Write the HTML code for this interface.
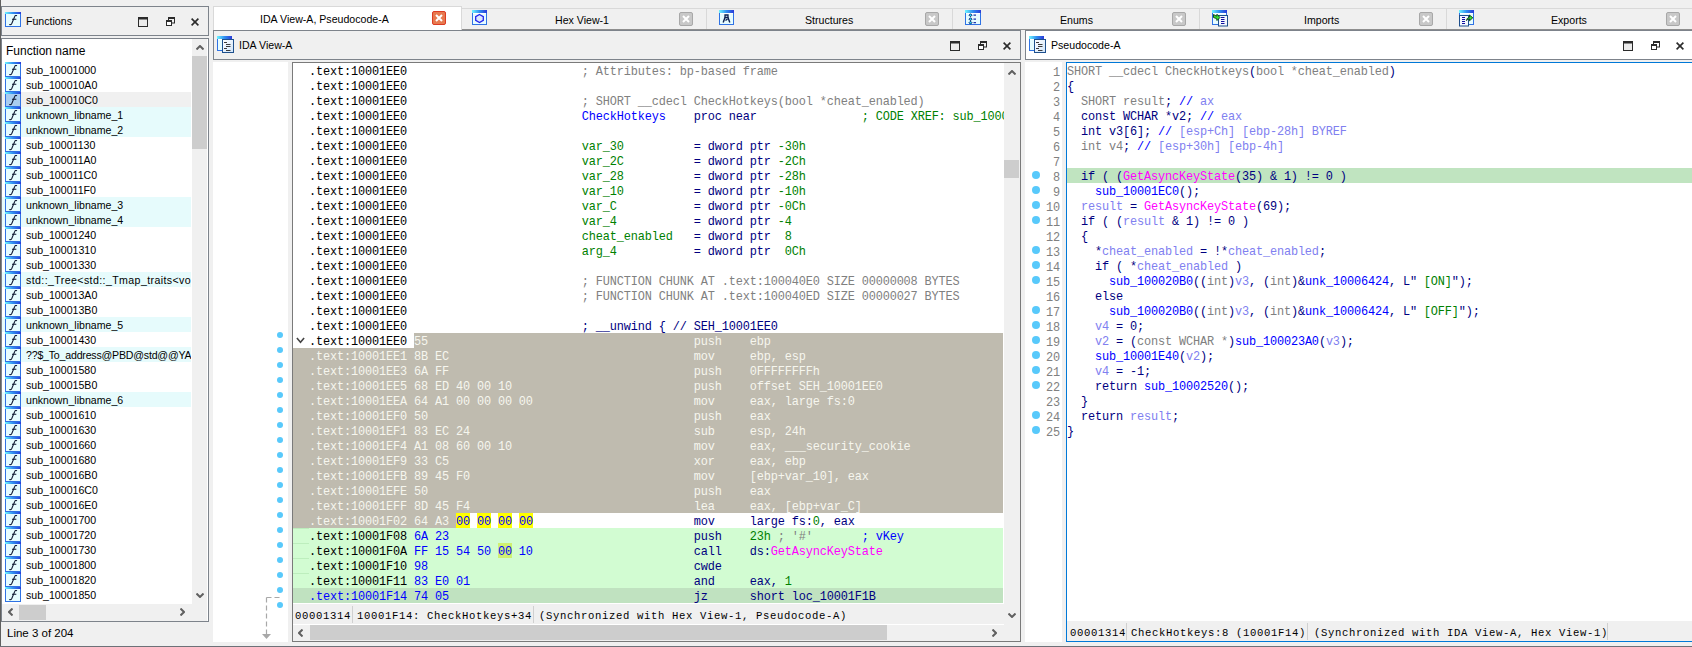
<!DOCTYPE html><html><head><meta charset="utf-8"><style>
*{margin:0;padding:0;box-sizing:border-box}
html,body{width:1692px;height:647px;overflow:hidden;background:#f0f0f0;position:relative;font-family:"Liberation Sans",sans-serif;font-size:12px;color:#000}
.a{position:absolute}
.mono{font-family:"Liberation Mono",monospace;padding-top:1px;font-size:11.9px;letter-spacing:-0.14px;white-space:pre;line-height:15px}
.ui{font-family:"Liberation Sans",sans-serif;font-size:10.6px;white-space:pre}
.ic{position:absolute}
.bmax{position:absolute;width:10px;height:10px;border:1px solid #222;border-top-width:2px}
.bres{position:absolute;width:9px;height:10px}
.bres i{position:absolute;left:2px;top:0;width:7px;height:6px;border:1px solid #222;border-top-width:2px}
.bres b{position:absolute;left:0;top:3px;width:7px;height:7px;border:1px solid #222;border-top-width:2px;background:inherit}
.bx{position:absolute}
.row{position:absolute;height:15px;left:0;right:0}
.st{font-size:10.6px;letter-spacing:0.64px;color:#000}
</style></head><body>
<svg width="0" height="0" style="position:absolute"><defs><linearGradient id="tbg" x1="0" x2="1"><stop offset="0" stop-color="#6ff6ff"/><stop offset="0.5" stop-color="#2f8ef0"/><stop offset="1" stop-color="#2a3ad8"/></linearGradient></defs></svg>

<div class="a" style="left:0;top:0;width:1px;height:647px;background:#5f5f5f"></div>
<div class="a" style="left:0;top:646px;width:1692px;height:1px;background:#6d7178"></div>
<div class="a" style="left:1px;top:6px;width:208px;height:30px;border:1px solid #7d838b;border-right-color:#7d838b"></div>
<div class="a" style="left:5px;top:12px"><svg class="ic" width="16" height="15" viewBox="0 0 16 15"><rect x="0.5" y="0.5" width="15" height="14" fill="#e6fcff" stroke="#2f72e4"/><rect x="0" y="0" width="16" height="2" fill="url(#tbg)"/><path d="M12 3.8 C11 3.2 10.1 3.5 9.6 4.8 L6.8 11.5 C6.3 12.6 5.5 12.9 4.2 12.6 M7 7.3 H11.3" fill="none" stroke="#0c1530" stroke-width="1.05"/></svg></div>
<div class="a ui" style="left:26px;top:15px">Functions</div>
<div style="position:absolute;left:0;top:0;background:#f0f0f0"><svg class="a" style="left:138px;top:17px" width="10" height="10" viewBox="0 0 10 10"><rect x="0.5" y="0.5" width="9" height="9" fill="#ebebeb" stroke="#2b2b2b"/><rect x="0" y="0" width="10" height="2.5" fill="#2b2b2b"/></svg>
<svg class="a" style="left:166px;top:17px" width="9" height="10" viewBox="0 0 9 10"><rect x="2.5" y="0.5" width="6" height="5.5" fill="none" stroke="#2b2b2b"/><rect x="2" y="0" width="7" height="2" fill="#2b2b2b"/><rect x="0.5" y="3.5" width="5" height="5" fill="#fff" stroke="#2b2b2b"/><rect x="0" y="3" width="6" height="2" fill="#2b2b2b"/></svg>
<svg class="a" style="left:191px;top:18px" width="8" height="8" viewBox="0 0 8 8"><path d="M0.6 0.6L7.4 7.4M7.4 0.6L0.6 7.4" stroke="#2b2b2b" stroke-width="1.6"/></svg></div>
<div class="a" style="left:1px;top:38px;width:208px;height:584px;border:1px solid #7d838b;background:#fff"></div>
<div class="a ui" style="left:6px;top:44px;font-size:12px">Function name</div>
<div class="a" style="left:5px;top:62px"><svg class="ic" width="16" height="15" viewBox="0 0 16 15"><rect x="0.5" y="0.5" width="15" height="14" fill="#e6fcff" stroke="#2f72e4"/><rect x="0" y="0" width="16" height="2" fill="url(#tbg)"/><path d="M12 3.8 C11 3.2 10.1 3.5 9.6 4.8 L6.8 11.5 C6.3 12.6 5.5 12.9 4.2 12.6 M7 7.3 H11.3" fill="none" stroke="#0c1530" stroke-width="1.05"/></svg></div>
<div class="a ui" style="left:26px;top:64px;width:165px;overflow:hidden;">sub_10001000</div>
<div class="a" style="left:5px;top:77px"><svg class="ic" width="16" height="15" viewBox="0 0 16 15"><rect x="0.5" y="0.5" width="15" height="14" fill="#e6fcff" stroke="#2f72e4"/><rect x="0" y="0" width="16" height="2" fill="url(#tbg)"/><path d="M12 3.8 C11 3.2 10.1 3.5 9.6 4.8 L6.8 11.5 C6.3 12.6 5.5 12.9 4.2 12.6 M7 7.3 H11.3" fill="none" stroke="#0c1530" stroke-width="1.05"/></svg></div>
<div class="a ui" style="left:26px;top:79px;width:165px;overflow:hidden;">sub_100010A0</div>
<div class="a" style="left:2px;top:92px;width:189px;height:15px;background:#f0f0f0"></div>
<div class="a" style="left:5px;top:92px"><svg class="ic" width="16" height="15" viewBox="0 0 16 15"><rect x="0.5" y="0.5" width="15" height="14" fill="#a9cdf0" stroke="#2f72e4"/><rect x="0" y="0" width="16" height="2" fill="url(#tbg)"/><path d="M12 3.8 C11 3.2 10.1 3.5 9.6 4.8 L6.8 11.5 C6.3 12.6 5.5 12.9 4.2 12.6 M7 7.3 H11.3" fill="none" stroke="#0c1530" stroke-width="1.05"/></svg></div>
<div class="a ui" style="left:26px;top:94px;width:165px;overflow:hidden;">sub_100010C0</div>
<div class="a" style="left:2px;top:107px;width:189px;height:15px;background:#e6fbfc"></div>
<div class="a" style="left:5px;top:107px"><svg class="ic" width="16" height="15" viewBox="0 0 16 15"><rect x="0.5" y="0.5" width="15" height="14" fill="#e6fcff" stroke="#2f72e4"/><rect x="0" y="0" width="16" height="2" fill="url(#tbg)"/><path d="M12 3.8 C11 3.2 10.1 3.5 9.6 4.8 L6.8 11.5 C6.3 12.6 5.5 12.9 4.2 12.6 M7 7.3 H11.3" fill="none" stroke="#0c1530" stroke-width="1.05"/></svg></div>
<div class="a ui" style="left:26px;top:109px;width:165px;overflow:hidden;">unknown_libname_1</div>
<div class="a" style="left:2px;top:122px;width:189px;height:15px;background:#e6fbfc"></div>
<div class="a" style="left:5px;top:122px"><svg class="ic" width="16" height="15" viewBox="0 0 16 15"><rect x="0.5" y="0.5" width="15" height="14" fill="#e6fcff" stroke="#2f72e4"/><rect x="0" y="0" width="16" height="2" fill="url(#tbg)"/><path d="M12 3.8 C11 3.2 10.1 3.5 9.6 4.8 L6.8 11.5 C6.3 12.6 5.5 12.9 4.2 12.6 M7 7.3 H11.3" fill="none" stroke="#0c1530" stroke-width="1.05"/></svg></div>
<div class="a ui" style="left:26px;top:124px;width:165px;overflow:hidden;">unknown_libname_2</div>
<div class="a" style="left:5px;top:137px"><svg class="ic" width="16" height="15" viewBox="0 0 16 15"><rect x="0.5" y="0.5" width="15" height="14" fill="#e6fcff" stroke="#2f72e4"/><rect x="0" y="0" width="16" height="2" fill="url(#tbg)"/><path d="M12 3.8 C11 3.2 10.1 3.5 9.6 4.8 L6.8 11.5 C6.3 12.6 5.5 12.9 4.2 12.6 M7 7.3 H11.3" fill="none" stroke="#0c1530" stroke-width="1.05"/></svg></div>
<div class="a ui" style="left:26px;top:139px;width:165px;overflow:hidden;">sub_10001130</div>
<div class="a" style="left:5px;top:152px"><svg class="ic" width="16" height="15" viewBox="0 0 16 15"><rect x="0.5" y="0.5" width="15" height="14" fill="#e6fcff" stroke="#2f72e4"/><rect x="0" y="0" width="16" height="2" fill="url(#tbg)"/><path d="M12 3.8 C11 3.2 10.1 3.5 9.6 4.8 L6.8 11.5 C6.3 12.6 5.5 12.9 4.2 12.6 M7 7.3 H11.3" fill="none" stroke="#0c1530" stroke-width="1.05"/></svg></div>
<div class="a ui" style="left:26px;top:154px;width:165px;overflow:hidden;">sub_100011A0</div>
<div class="a" style="left:5px;top:167px"><svg class="ic" width="16" height="15" viewBox="0 0 16 15"><rect x="0.5" y="0.5" width="15" height="14" fill="#e6fcff" stroke="#2f72e4"/><rect x="0" y="0" width="16" height="2" fill="url(#tbg)"/><path d="M12 3.8 C11 3.2 10.1 3.5 9.6 4.8 L6.8 11.5 C6.3 12.6 5.5 12.9 4.2 12.6 M7 7.3 H11.3" fill="none" stroke="#0c1530" stroke-width="1.05"/></svg></div>
<div class="a ui" style="left:26px;top:169px;width:165px;overflow:hidden;">sub_100011C0</div>
<div class="a" style="left:5px;top:182px"><svg class="ic" width="16" height="15" viewBox="0 0 16 15"><rect x="0.5" y="0.5" width="15" height="14" fill="#e6fcff" stroke="#2f72e4"/><rect x="0" y="0" width="16" height="2" fill="url(#tbg)"/><path d="M12 3.8 C11 3.2 10.1 3.5 9.6 4.8 L6.8 11.5 C6.3 12.6 5.5 12.9 4.2 12.6 M7 7.3 H11.3" fill="none" stroke="#0c1530" stroke-width="1.05"/></svg></div>
<div class="a ui" style="left:26px;top:184px;width:165px;overflow:hidden;">sub_100011F0</div>
<div class="a" style="left:2px;top:197px;width:189px;height:15px;background:#e6fbfc"></div>
<div class="a" style="left:5px;top:197px"><svg class="ic" width="16" height="15" viewBox="0 0 16 15"><rect x="0.5" y="0.5" width="15" height="14" fill="#e6fcff" stroke="#2f72e4"/><rect x="0" y="0" width="16" height="2" fill="url(#tbg)"/><path d="M12 3.8 C11 3.2 10.1 3.5 9.6 4.8 L6.8 11.5 C6.3 12.6 5.5 12.9 4.2 12.6 M7 7.3 H11.3" fill="none" stroke="#0c1530" stroke-width="1.05"/></svg></div>
<div class="a ui" style="left:26px;top:199px;width:165px;overflow:hidden;">unknown_libname_3</div>
<div class="a" style="left:2px;top:212px;width:189px;height:15px;background:#e6fbfc"></div>
<div class="a" style="left:5px;top:212px"><svg class="ic" width="16" height="15" viewBox="0 0 16 15"><rect x="0.5" y="0.5" width="15" height="14" fill="#e6fcff" stroke="#2f72e4"/><rect x="0" y="0" width="16" height="2" fill="url(#tbg)"/><path d="M12 3.8 C11 3.2 10.1 3.5 9.6 4.8 L6.8 11.5 C6.3 12.6 5.5 12.9 4.2 12.6 M7 7.3 H11.3" fill="none" stroke="#0c1530" stroke-width="1.05"/></svg></div>
<div class="a ui" style="left:26px;top:214px;width:165px;overflow:hidden;">unknown_libname_4</div>
<div class="a" style="left:5px;top:227px"><svg class="ic" width="16" height="15" viewBox="0 0 16 15"><rect x="0.5" y="0.5" width="15" height="14" fill="#e6fcff" stroke="#2f72e4"/><rect x="0" y="0" width="16" height="2" fill="url(#tbg)"/><path d="M12 3.8 C11 3.2 10.1 3.5 9.6 4.8 L6.8 11.5 C6.3 12.6 5.5 12.9 4.2 12.6 M7 7.3 H11.3" fill="none" stroke="#0c1530" stroke-width="1.05"/></svg></div>
<div class="a ui" style="left:26px;top:229px;width:165px;overflow:hidden;">sub_10001240</div>
<div class="a" style="left:5px;top:242px"><svg class="ic" width="16" height="15" viewBox="0 0 16 15"><rect x="0.5" y="0.5" width="15" height="14" fill="#e6fcff" stroke="#2f72e4"/><rect x="0" y="0" width="16" height="2" fill="url(#tbg)"/><path d="M12 3.8 C11 3.2 10.1 3.5 9.6 4.8 L6.8 11.5 C6.3 12.6 5.5 12.9 4.2 12.6 M7 7.3 H11.3" fill="none" stroke="#0c1530" stroke-width="1.05"/></svg></div>
<div class="a ui" style="left:26px;top:244px;width:165px;overflow:hidden;">sub_10001310</div>
<div class="a" style="left:5px;top:257px"><svg class="ic" width="16" height="15" viewBox="0 0 16 15"><rect x="0.5" y="0.5" width="15" height="14" fill="#e6fcff" stroke="#2f72e4"/><rect x="0" y="0" width="16" height="2" fill="url(#tbg)"/><path d="M12 3.8 C11 3.2 10.1 3.5 9.6 4.8 L6.8 11.5 C6.3 12.6 5.5 12.9 4.2 12.6 M7 7.3 H11.3" fill="none" stroke="#0c1530" stroke-width="1.05"/></svg></div>
<div class="a ui" style="left:26px;top:259px;width:165px;overflow:hidden;">sub_10001330</div>
<div class="a" style="left:2px;top:272px;width:189px;height:15px;background:#e6fbfc"></div>
<div class="a" style="left:5px;top:272px"><svg class="ic" width="16" height="15" viewBox="0 0 16 15"><rect x="0.5" y="0.5" width="15" height="14" fill="#e6fcff" stroke="#2f72e4"/><rect x="0" y="0" width="16" height="2" fill="url(#tbg)"/><path d="M12 3.8 C11 3.2 10.1 3.5 9.6 4.8 L6.8 11.5 C6.3 12.6 5.5 12.9 4.2 12.6 M7 7.3 H11.3" fill="none" stroke="#0c1530" stroke-width="1.05"/></svg></div>
<div class="a ui" style="left:26px;top:274px;width:165px;overflow:hidden;letter-spacing:0.4px;">std::_Tree&lt;std::_Tmap_traits&lt;vo</div>
<div class="a" style="left:5px;top:287px"><svg class="ic" width="16" height="15" viewBox="0 0 16 15"><rect x="0.5" y="0.5" width="15" height="14" fill="#e6fcff" stroke="#2f72e4"/><rect x="0" y="0" width="16" height="2" fill="url(#tbg)"/><path d="M12 3.8 C11 3.2 10.1 3.5 9.6 4.8 L6.8 11.5 C6.3 12.6 5.5 12.9 4.2 12.6 M7 7.3 H11.3" fill="none" stroke="#0c1530" stroke-width="1.05"/></svg></div>
<div class="a ui" style="left:26px;top:289px;width:165px;overflow:hidden;">sub_100013A0</div>
<div class="a" style="left:5px;top:302px"><svg class="ic" width="16" height="15" viewBox="0 0 16 15"><rect x="0.5" y="0.5" width="15" height="14" fill="#e6fcff" stroke="#2f72e4"/><rect x="0" y="0" width="16" height="2" fill="url(#tbg)"/><path d="M12 3.8 C11 3.2 10.1 3.5 9.6 4.8 L6.8 11.5 C6.3 12.6 5.5 12.9 4.2 12.6 M7 7.3 H11.3" fill="none" stroke="#0c1530" stroke-width="1.05"/></svg></div>
<div class="a ui" style="left:26px;top:304px;width:165px;overflow:hidden;">sub_100013B0</div>
<div class="a" style="left:2px;top:317px;width:189px;height:15px;background:#e6fbfc"></div>
<div class="a" style="left:5px;top:317px"><svg class="ic" width="16" height="15" viewBox="0 0 16 15"><rect x="0.5" y="0.5" width="15" height="14" fill="#e6fcff" stroke="#2f72e4"/><rect x="0" y="0" width="16" height="2" fill="url(#tbg)"/><path d="M12 3.8 C11 3.2 10.1 3.5 9.6 4.8 L6.8 11.5 C6.3 12.6 5.5 12.9 4.2 12.6 M7 7.3 H11.3" fill="none" stroke="#0c1530" stroke-width="1.05"/></svg></div>
<div class="a ui" style="left:26px;top:319px;width:165px;overflow:hidden;">unknown_libname_5</div>
<div class="a" style="left:5px;top:332px"><svg class="ic" width="16" height="15" viewBox="0 0 16 15"><rect x="0.5" y="0.5" width="15" height="14" fill="#e6fcff" stroke="#2f72e4"/><rect x="0" y="0" width="16" height="2" fill="url(#tbg)"/><path d="M12 3.8 C11 3.2 10.1 3.5 9.6 4.8 L6.8 11.5 C6.3 12.6 5.5 12.9 4.2 12.6 M7 7.3 H11.3" fill="none" stroke="#0c1530" stroke-width="1.05"/></svg></div>
<div class="a ui" style="left:26px;top:334px;width:165px;overflow:hidden;">sub_10001430</div>
<div class="a" style="left:2px;top:347px;width:189px;height:15px;background:#e6fbfc"></div>
<div class="a" style="left:5px;top:347px"><svg class="ic" width="16" height="15" viewBox="0 0 16 15"><rect x="0.5" y="0.5" width="15" height="14" fill="#e6fcff" stroke="#2f72e4"/><rect x="0" y="0" width="16" height="2" fill="url(#tbg)"/><path d="M12 3.8 C11 3.2 10.1 3.5 9.6 4.8 L6.8 11.5 C6.3 12.6 5.5 12.9 4.2 12.6 M7 7.3 H11.3" fill="none" stroke="#0c1530" stroke-width="1.05"/></svg></div>
<div class="a ui" style="left:26px;top:349px;width:165px;overflow:hidden;letter-spacing:-0.2px;">??$_To_address@PBD@std@@YA</div>
<div class="a" style="left:5px;top:362px"><svg class="ic" width="16" height="15" viewBox="0 0 16 15"><rect x="0.5" y="0.5" width="15" height="14" fill="#e6fcff" stroke="#2f72e4"/><rect x="0" y="0" width="16" height="2" fill="url(#tbg)"/><path d="M12 3.8 C11 3.2 10.1 3.5 9.6 4.8 L6.8 11.5 C6.3 12.6 5.5 12.9 4.2 12.6 M7 7.3 H11.3" fill="none" stroke="#0c1530" stroke-width="1.05"/></svg></div>
<div class="a ui" style="left:26px;top:364px;width:165px;overflow:hidden;">sub_10001580</div>
<div class="a" style="left:5px;top:377px"><svg class="ic" width="16" height="15" viewBox="0 0 16 15"><rect x="0.5" y="0.5" width="15" height="14" fill="#e6fcff" stroke="#2f72e4"/><rect x="0" y="0" width="16" height="2" fill="url(#tbg)"/><path d="M12 3.8 C11 3.2 10.1 3.5 9.6 4.8 L6.8 11.5 C6.3 12.6 5.5 12.9 4.2 12.6 M7 7.3 H11.3" fill="none" stroke="#0c1530" stroke-width="1.05"/></svg></div>
<div class="a ui" style="left:26px;top:379px;width:165px;overflow:hidden;">sub_100015B0</div>
<div class="a" style="left:2px;top:392px;width:189px;height:15px;background:#e6fbfc"></div>
<div class="a" style="left:5px;top:392px"><svg class="ic" width="16" height="15" viewBox="0 0 16 15"><rect x="0.5" y="0.5" width="15" height="14" fill="#e6fcff" stroke="#2f72e4"/><rect x="0" y="0" width="16" height="2" fill="url(#tbg)"/><path d="M12 3.8 C11 3.2 10.1 3.5 9.6 4.8 L6.8 11.5 C6.3 12.6 5.5 12.9 4.2 12.6 M7 7.3 H11.3" fill="none" stroke="#0c1530" stroke-width="1.05"/></svg></div>
<div class="a ui" style="left:26px;top:394px;width:165px;overflow:hidden;">unknown_libname_6</div>
<div class="a" style="left:5px;top:407px"><svg class="ic" width="16" height="15" viewBox="0 0 16 15"><rect x="0.5" y="0.5" width="15" height="14" fill="#e6fcff" stroke="#2f72e4"/><rect x="0" y="0" width="16" height="2" fill="url(#tbg)"/><path d="M12 3.8 C11 3.2 10.1 3.5 9.6 4.8 L6.8 11.5 C6.3 12.6 5.5 12.9 4.2 12.6 M7 7.3 H11.3" fill="none" stroke="#0c1530" stroke-width="1.05"/></svg></div>
<div class="a ui" style="left:26px;top:409px;width:165px;overflow:hidden;">sub_10001610</div>
<div class="a" style="left:5px;top:422px"><svg class="ic" width="16" height="15" viewBox="0 0 16 15"><rect x="0.5" y="0.5" width="15" height="14" fill="#e6fcff" stroke="#2f72e4"/><rect x="0" y="0" width="16" height="2" fill="url(#tbg)"/><path d="M12 3.8 C11 3.2 10.1 3.5 9.6 4.8 L6.8 11.5 C6.3 12.6 5.5 12.9 4.2 12.6 M7 7.3 H11.3" fill="none" stroke="#0c1530" stroke-width="1.05"/></svg></div>
<div class="a ui" style="left:26px;top:424px;width:165px;overflow:hidden;">sub_10001630</div>
<div class="a" style="left:5px;top:437px"><svg class="ic" width="16" height="15" viewBox="0 0 16 15"><rect x="0.5" y="0.5" width="15" height="14" fill="#e6fcff" stroke="#2f72e4"/><rect x="0" y="0" width="16" height="2" fill="url(#tbg)"/><path d="M12 3.8 C11 3.2 10.1 3.5 9.6 4.8 L6.8 11.5 C6.3 12.6 5.5 12.9 4.2 12.6 M7 7.3 H11.3" fill="none" stroke="#0c1530" stroke-width="1.05"/></svg></div>
<div class="a ui" style="left:26px;top:439px;width:165px;overflow:hidden;">sub_10001660</div>
<div class="a" style="left:5px;top:452px"><svg class="ic" width="16" height="15" viewBox="0 0 16 15"><rect x="0.5" y="0.5" width="15" height="14" fill="#e6fcff" stroke="#2f72e4"/><rect x="0" y="0" width="16" height="2" fill="url(#tbg)"/><path d="M12 3.8 C11 3.2 10.1 3.5 9.6 4.8 L6.8 11.5 C6.3 12.6 5.5 12.9 4.2 12.6 M7 7.3 H11.3" fill="none" stroke="#0c1530" stroke-width="1.05"/></svg></div>
<div class="a ui" style="left:26px;top:454px;width:165px;overflow:hidden;">sub_10001680</div>
<div class="a" style="left:5px;top:467px"><svg class="ic" width="16" height="15" viewBox="0 0 16 15"><rect x="0.5" y="0.5" width="15" height="14" fill="#e6fcff" stroke="#2f72e4"/><rect x="0" y="0" width="16" height="2" fill="url(#tbg)"/><path d="M12 3.8 C11 3.2 10.1 3.5 9.6 4.8 L6.8 11.5 C6.3 12.6 5.5 12.9 4.2 12.6 M7 7.3 H11.3" fill="none" stroke="#0c1530" stroke-width="1.05"/></svg></div>
<div class="a ui" style="left:26px;top:469px;width:165px;overflow:hidden;">sub_100016B0</div>
<div class="a" style="left:5px;top:482px"><svg class="ic" width="16" height="15" viewBox="0 0 16 15"><rect x="0.5" y="0.5" width="15" height="14" fill="#e6fcff" stroke="#2f72e4"/><rect x="0" y="0" width="16" height="2" fill="url(#tbg)"/><path d="M12 3.8 C11 3.2 10.1 3.5 9.6 4.8 L6.8 11.5 C6.3 12.6 5.5 12.9 4.2 12.6 M7 7.3 H11.3" fill="none" stroke="#0c1530" stroke-width="1.05"/></svg></div>
<div class="a ui" style="left:26px;top:484px;width:165px;overflow:hidden;">sub_100016C0</div>
<div class="a" style="left:5px;top:497px"><svg class="ic" width="16" height="15" viewBox="0 0 16 15"><rect x="0.5" y="0.5" width="15" height="14" fill="#e6fcff" stroke="#2f72e4"/><rect x="0" y="0" width="16" height="2" fill="url(#tbg)"/><path d="M12 3.8 C11 3.2 10.1 3.5 9.6 4.8 L6.8 11.5 C6.3 12.6 5.5 12.9 4.2 12.6 M7 7.3 H11.3" fill="none" stroke="#0c1530" stroke-width="1.05"/></svg></div>
<div class="a ui" style="left:26px;top:499px;width:165px;overflow:hidden;">sub_100016E0</div>
<div class="a" style="left:5px;top:512px"><svg class="ic" width="16" height="15" viewBox="0 0 16 15"><rect x="0.5" y="0.5" width="15" height="14" fill="#e6fcff" stroke="#2f72e4"/><rect x="0" y="0" width="16" height="2" fill="url(#tbg)"/><path d="M12 3.8 C11 3.2 10.1 3.5 9.6 4.8 L6.8 11.5 C6.3 12.6 5.5 12.9 4.2 12.6 M7 7.3 H11.3" fill="none" stroke="#0c1530" stroke-width="1.05"/></svg></div>
<div class="a ui" style="left:26px;top:514px;width:165px;overflow:hidden;">sub_10001700</div>
<div class="a" style="left:5px;top:527px"><svg class="ic" width="16" height="15" viewBox="0 0 16 15"><rect x="0.5" y="0.5" width="15" height="14" fill="#e6fcff" stroke="#2f72e4"/><rect x="0" y="0" width="16" height="2" fill="url(#tbg)"/><path d="M12 3.8 C11 3.2 10.1 3.5 9.6 4.8 L6.8 11.5 C6.3 12.6 5.5 12.9 4.2 12.6 M7 7.3 H11.3" fill="none" stroke="#0c1530" stroke-width="1.05"/></svg></div>
<div class="a ui" style="left:26px;top:529px;width:165px;overflow:hidden;">sub_10001720</div>
<div class="a" style="left:5px;top:542px"><svg class="ic" width="16" height="15" viewBox="0 0 16 15"><rect x="0.5" y="0.5" width="15" height="14" fill="#e6fcff" stroke="#2f72e4"/><rect x="0" y="0" width="16" height="2" fill="url(#tbg)"/><path d="M12 3.8 C11 3.2 10.1 3.5 9.6 4.8 L6.8 11.5 C6.3 12.6 5.5 12.9 4.2 12.6 M7 7.3 H11.3" fill="none" stroke="#0c1530" stroke-width="1.05"/></svg></div>
<div class="a ui" style="left:26px;top:544px;width:165px;overflow:hidden;">sub_10001730</div>
<div class="a" style="left:5px;top:557px"><svg class="ic" width="16" height="15" viewBox="0 0 16 15"><rect x="0.5" y="0.5" width="15" height="14" fill="#e6fcff" stroke="#2f72e4"/><rect x="0" y="0" width="16" height="2" fill="url(#tbg)"/><path d="M12 3.8 C11 3.2 10.1 3.5 9.6 4.8 L6.8 11.5 C6.3 12.6 5.5 12.9 4.2 12.6 M7 7.3 H11.3" fill="none" stroke="#0c1530" stroke-width="1.05"/></svg></div>
<div class="a ui" style="left:26px;top:559px;width:165px;overflow:hidden;">sub_10001800</div>
<div class="a" style="left:5px;top:572px"><svg class="ic" width="16" height="15" viewBox="0 0 16 15"><rect x="0.5" y="0.5" width="15" height="14" fill="#e6fcff" stroke="#2f72e4"/><rect x="0" y="0" width="16" height="2" fill="url(#tbg)"/><path d="M12 3.8 C11 3.2 10.1 3.5 9.6 4.8 L6.8 11.5 C6.3 12.6 5.5 12.9 4.2 12.6 M7 7.3 H11.3" fill="none" stroke="#0c1530" stroke-width="1.05"/></svg></div>
<div class="a ui" style="left:26px;top:574px;width:165px;overflow:hidden;">sub_10001820</div>
<div class="a" style="left:5px;top:587px"><svg class="ic" width="16" height="15" viewBox="0 0 16 15"><rect x="0.5" y="0.5" width="15" height="14" fill="#e6fcff" stroke="#2f72e4"/><rect x="0" y="0" width="16" height="2" fill="url(#tbg)"/><path d="M12 3.8 C11 3.2 10.1 3.5 9.6 4.8 L6.8 11.5 C6.3 12.6 5.5 12.9 4.2 12.6 M7 7.3 H11.3" fill="none" stroke="#0c1530" stroke-width="1.05"/></svg></div>
<div class="a ui" style="left:26px;top:589px;width:165px;overflow:hidden;">sub_10001850</div>
<div class="a" style="left:192px;top:39px;width:15px;height:565px;background:#f0f0f0"></div>
<svg class="a" style="left:196px;top:45px" width="8" height="5"><path d="M0.5 4.5L4 1L7.5 4.5" fill="none" stroke="#606060" stroke-width="2"/></svg>
<div class="a" style="left:192px;top:56px;width:15px;height:93px;background:#cdcdcd"></div>
<svg class="a" style="left:196px;top:593px" width="8" height="5"><path d="M0.5 0.5L4 4L7.5 0.5" fill="none" stroke="#606060" stroke-width="2"/></svg>
<div class="a" style="left:2px;top:604px;width:205px;height:17px;background:#f0f0f0"></div>
<svg class="a" style="left:8px;top:608px" width="5" height="8"><path d="M4.5 0.5L1 4L4.5 7.5" fill="none" stroke="#606060" stroke-width="2"/></svg>
<div class="a" style="left:19px;top:605px;width:27px;height:15px;background:#cdcdcd"></div>
<svg class="a" style="left:180px;top:608px" width="5" height="8"><path d="M0.5 0.5L4 4L0.5 7.5" fill="none" stroke="#606060" stroke-width="2"/></svg>
<div class="a ui" style="left:7px;top:627px;font-size:11.5px">Line 3 of 204</div>
<div class="a" style="left:461px;top:8px;width:1231px;height:22px;border-top:1px solid #d9d9d9;border-bottom:1px solid #8e8e8e"></div>
<div class="a" style="left:213px;top:6px;width:249px;height:24px;background:#fff;border:1px solid #d9d9d9;border-bottom:none"></div>
<div class="a ui" style="left:260px;top:13px">IDA View-A, Pseudocode-A</div>
<div class="a" style="left:432px;top:11px;width:14px;height:14px;background:#e7794f;border:1px solid #dc3b22;border-radius:2px"></div>
<svg class="a" style="left:435px;top:14px" width="8" height="8"><path d="M1 1L7 7M7 1L1 7" stroke="#fff" stroke-width="2"/></svg>
<div class="a" style="left:472px;top:10px"><svg class="ic" width="15" height="15" viewBox="0 0 15 15"><rect x="0.5" y="0.5" width="14" height="14" fill="#e6fcff" stroke="#2f72e4"/><rect x="0" y="0" width="15" height="3" fill="url(#tbg)"/><rect x="1" y="3" width="13" height="1" fill="#ffffff"/><path d="M7.5 4.5 L11.3 6.6 V10.4 L7.5 12.5 L3.7 10.4 V6.6 Z" fill="#dce8fb" stroke="#2222ee" stroke-width="1.3"/></svg></div>
<div class="a ui" style="left:555px;top:14px">Hex View-1</div>
<div class="a" style="left:679px;top:12px;width:14px;height:14px;background:#c8c8c8;border:1px solid #a8a8a8;border-radius:2px"></div>
<svg class="a" style="left:682px;top:15px" width="8" height="8"><path d="M1 1L7 7M7 1L1 7" stroke="#fff" stroke-width="2"/></svg>
<div class="a" style="left:706px;top:9px;width:1px;height:20px;background:#d9d9d9"></div>
<div class="a" style="left:719px;top:10px"><svg class="ic" width="15" height="15" viewBox="0 0 15 15"><rect x="0.5" y="0.5" width="14" height="14" fill="#e6fcff" stroke="#2f72e4"/><rect x="0" y="0" width="15" height="3" fill="url(#tbg)"/><rect x="1" y="3" width="13" height="1" fill="#ffffff"/><path d="M6 5h3v2.5h-3z" fill="none" stroke="#0e2050" stroke-width="1.3"/><path d="M6 7.5 L4.2 12.5 M9 7.5 L10.8 12.5 M6.5 10.5 L8.5 9" fill="none" stroke="#0e2050" stroke-width="1.4"/></svg></div>
<div class="a ui" style="left:805px;top:14px">Structures</div>
<div class="a" style="left:925px;top:12px;width:14px;height:14px;background:#c8c8c8;border:1px solid #a8a8a8;border-radius:2px"></div>
<svg class="a" style="left:928px;top:15px" width="8" height="8"><path d="M1 1L7 7M7 1L1 7" stroke="#fff" stroke-width="2"/></svg>
<div class="a" style="left:952px;top:9px;width:1px;height:20px;background:#d9d9d9"></div>
<div class="a" style="left:965px;top:10px"><svg class="ic" width="16" height="15" viewBox="0 0 16 15"><rect x="0.5" y="0.5" width="15" height="14" fill="#e6fcff" stroke="#2f72e4"/><rect x="0" y="0" width="16" height="3" fill="url(#tbg)"/><rect x="1" y="3" width="14" height="1" fill="#ffffff"/><g fill="#19e0f0" stroke="#0a1a70" stroke-width="0.9"><path d="M5.5 3.7 L7 5.2 L5.5 6.7 L4 5.2Z"/><path d="M5.5 7.7 L7 9.2 L5.5 10.7 L4 9.2Z"/><path d="M5.5 11.2 L7 12.7 L5.5 14.2 L4 12.7Z"/></g><path d="M8.5 5.2h2.5M8.5 9.2h2.5M8.5 12.7h2.5" stroke="#2233aa" stroke-width="1.2"/></svg></div>
<div class="a ui" style="left:1060px;top:14px">Enums</div>
<div class="a" style="left:1172px;top:12px;width:14px;height:14px;background:#c8c8c8;border:1px solid #a8a8a8;border-radius:2px"></div>
<svg class="a" style="left:1175px;top:15px" width="8" height="8"><path d="M1 1L7 7M7 1L1 7" stroke="#fff" stroke-width="2"/></svg>
<div class="a" style="left:1199px;top:9px;width:1px;height:20px;background:#d9d9d9"></div>
<div class="a" style="left:1212px;top:10px"><svg class="ic" width="17" height="17" viewBox="0 0 17 17"><rect x="0.5" y="0.5" width="14" height="14" fill="#e6fcff" stroke="#2f72e4"/><rect x="0" y="0" width="15" height="3" fill="url(#tbg)"/><rect x="1" y="3" width="13" height="1" fill="#ffffff"/><rect x="6.5" y="5.5" width="9" height="10.5" fill="#f4f8ff" stroke="#1d4f8c"/><path d="M9 7.5h3.5M9 9.5h3.5M9 11.5h3.5M9 13.5h3.5" stroke="#1010a0" stroke-width="1"/><path d="M1.5 4.5 L4.5 6.2 L5 4.3 L8 7.5 L5 10.5 L4.6 8.6 L1.5 7.5Z" fill="#33dd33" stroke="#0b3a0b" stroke-width="0.9"/></svg></div>
<div class="a ui" style="left:1304px;top:14px">Imports</div>
<div class="a" style="left:1419px;top:12px;width:14px;height:14px;background:#c8c8c8;border:1px solid #a8a8a8;border-radius:2px"></div>
<svg class="a" style="left:1422px;top:15px" width="8" height="8"><path d="M1 1L7 7M7 1L1 7" stroke="#fff" stroke-width="2"/></svg>
<div class="a" style="left:1446px;top:9px;width:1px;height:20px;background:#d9d9d9"></div>
<div class="a" style="left:1459px;top:10px"><svg class="ic" width="17" height="17" viewBox="0 0 17 17"><rect x="0.5" y="0.5" width="14" height="14" fill="#e6fcff" stroke="#2f72e4"/><rect x="0" y="0" width="15" height="3" fill="url(#tbg)"/><rect x="1" y="3" width="13" height="1" fill="#ffffff"/><rect x="0.5" y="5.5" width="9" height="10.5" fill="#f4f8ff" stroke="#1d4f8c"/><path d="M3 7.5h3M3 9.5h3M3 11.5h3M3 13.5h3" stroke="#1010a0" stroke-width="1"/><path d="M7.5 10.5 C8 8 9.5 7.2 10.5 7.2 L10.5 5 L13.8 7.8 L10.5 10.8 L10.5 8.8 C9.5 8.8 8.5 9.5 7.5 10.5Z" fill="#33dd33" stroke="#0b3a0b" stroke-width="0.9"/></svg></div>
<div class="a ui" style="left:1551px;top:14px">Exports</div>
<div class="a" style="left:1666px;top:12px;width:14px;height:14px;background:#c8c8c8;border:1px solid #a8a8a8;border-radius:2px"></div>
<svg class="a" style="left:1669px;top:15px" width="8" height="8"><path d="M1 1L7 7M7 1L1 7" stroke="#fff" stroke-width="2"/></svg>
<div class="a" style="left:213px;top:30px;width:808px;height:30px;border:1px solid #7d838b;background:#f0f0f0"></div>
<div class="a" style="left:217px;top:36px"><svg class="ic" width="17" height="17" viewBox="0 0 17 17"><rect x="0.5" y="0.5" width="14" height="14" fill="#e6fcff" stroke="#2f72e4"/><rect x="0" y="0" width="15" height="3" fill="url(#tbg)"/><rect x="1" y="3" width="13" height="1" fill="#ffffff"/><defs><linearGradient id="dg" x1="0" y1="0" x2="1" y2="1"><stop offset="0" stop-color="#ffffff"/><stop offset="1" stop-color="#cfe4fa"/></linearGradient></defs><rect x="5.5" y="3.5" width="11" height="13" fill="url(#dg)" stroke="#1d4f8c"/><path d="M7 6.5h3M9 8.5h4.5M9 10.5h4.5M7 12.5h3M9 14.5h4.5" stroke="#3c3c3c" stroke-width="1.1"/></svg></div>
<div class="a ui" style="left:239px;top:39px">IDA View-A</div>
<div style="position:absolute;left:0;top:0;background:#f0f0f0"><svg class="a" style="left:950px;top:41px" width="10" height="10" viewBox="0 0 10 10"><rect x="0.5" y="0.5" width="9" height="9" fill="#ebebeb" stroke="#2b2b2b"/><rect x="0" y="0" width="10" height="2.5" fill="#2b2b2b"/></svg>
<svg class="a" style="left:978px;top:41px" width="9" height="10" viewBox="0 0 9 10"><rect x="2.5" y="0.5" width="6" height="5.5" fill="none" stroke="#2b2b2b"/><rect x="2" y="0" width="7" height="2" fill="#2b2b2b"/><rect x="0.5" y="3.5" width="5" height="5" fill="#fff" stroke="#2b2b2b"/><rect x="0" y="3" width="6" height="2" fill="#2b2b2b"/></svg>
<svg class="a" style="left:1003px;top:42px" width="8" height="8" viewBox="0 0 8 8"><path d="M0.6 0.6L7.4 7.4M7.4 0.6L0.6 7.4" stroke="#2b2b2b" stroke-width="1.6"/></svg></div>
<div class="a" style="left:213px;top:62px;width:75px;height:580px;background:#fff"></div>
<div class="a" style="left:292px;top:62px;width:729px;height:580px;border:1px solid #7a7a7a;background:#fff;overflow:hidden" id="idat">
<div class="a mono" style="left:16px;top:1px"><span style="color:#000000">.text:10001EE0                         </span><span style="color:#808080">; Attributes: bp-based frame</span></div>
<div class="a mono" style="left:16px;top:16px"><span style="color:#000000">.text:10001EE0</span></div>
<div class="a mono" style="left:16px;top:31px"><span style="color:#000000">.text:10001EE0                         </span><span style="color:#808080">; SHORT __cdecl CheckHotkeys(bool *cheat_enabled)</span></div>
<div class="a mono" style="left:16px;top:46px"><span style="color:#000000">.text:10001EE0                         </span><span style="color:#0000ff">CheckHotkeys</span><span style="color:#000000">    </span><span style="color:#000080">proc near</span><span style="color:#000000">               </span><span style="color:#008000">; CODE XREF: sub_10001000+1E</span></div>
<div class="a mono" style="left:16px;top:61px"><span style="color:#000000">.text:10001EE0</span></div>
<div class="a mono" style="left:16px;top:76px"><span style="color:#000000">.text:10001EE0                         </span><span style="color:#008000">var_30          </span><span style="color:#000080">= dword ptr </span><span style="color:#008000">-30h</span></div>
<div class="a mono" style="left:16px;top:91px"><span style="color:#000000">.text:10001EE0                         </span><span style="color:#008000">var_2C          </span><span style="color:#000080">= dword ptr </span><span style="color:#008000">-2Ch</span></div>
<div class="a mono" style="left:16px;top:106px"><span style="color:#000000">.text:10001EE0                         </span><span style="color:#008000">var_28          </span><span style="color:#000080">= dword ptr </span><span style="color:#008000">-28h</span></div>
<div class="a mono" style="left:16px;top:121px"><span style="color:#000000">.text:10001EE0                         </span><span style="color:#008000">var_10          </span><span style="color:#000080">= dword ptr </span><span style="color:#008000">-10h</span></div>
<div class="a mono" style="left:16px;top:136px"><span style="color:#000000">.text:10001EE0                         </span><span style="color:#008000">var_C           </span><span style="color:#000080">= dword ptr </span><span style="color:#008000">-0Ch</span></div>
<div class="a mono" style="left:16px;top:151px"><span style="color:#000000">.text:10001EE0                         </span><span style="color:#008000">var_4           </span><span style="color:#000080">= dword ptr </span><span style="color:#008000">-4</span></div>
<div class="a mono" style="left:16px;top:166px"><span style="color:#000000">.text:10001EE0                         </span><span style="color:#008000">cheat_enabled   </span><span style="color:#000080">= dword ptr </span><span style="color:#008000"> 8</span></div>
<div class="a mono" style="left:16px;top:181px"><span style="color:#000000">.text:10001EE0                         </span><span style="color:#008000">arg_4           </span><span style="color:#000080">= dword ptr </span><span style="color:#008000"> 0Ch</span></div>
<div class="a mono" style="left:16px;top:196px"><span style="color:#000000">.text:10001EE0</span></div>
<div class="a mono" style="left:16px;top:211px"><span style="color:#000000">.text:10001EE0                         </span><span style="color:#808080">; FUNCTION CHUNK AT .text:100040E0 SIZE 00000008 BYTES</span></div>
<div class="a mono" style="left:16px;top:226px"><span style="color:#000000">.text:10001EE0                         </span><span style="color:#808080">; FUNCTION CHUNK AT .text:100040ED SIZE 00000027 BYTES</span></div>
<div class="a mono" style="left:16px;top:241px"><span style="color:#000000">.text:10001EE0</span></div>
<div class="a mono" style="left:16px;top:256px"><span style="color:#000000">.text:10001EE0                         </span><span style="color:#000080">; __unwind { // SEH_10001EE0</span></div>
<div class="a" style="left:121px;top:270px;width:589px;height:15px;background:#bfbbaf"></div>
<div class="a mono" style="left:16px;top:271px"><span style="color:#000000">.text:10001EE0 </span><span style="color:#f6f6ee">55                                      push    ebp</span></div>
<div class="a" style="left:0px;top:285px;width:710px;height:15px;background:#bfbbaf"></div>
<div class="a mono" style="left:16px;top:286px"><span style="color:#f6f6ee">.text:10001EE1 8B EC                                   mov     ebp, esp</span></div>
<div class="a" style="left:0px;top:300px;width:710px;height:15px;background:#bfbbaf"></div>
<div class="a mono" style="left:16px;top:301px"><span style="color:#f6f6ee">.text:10001EE3 6A FF                                   push    0FFFFFFFFh</span></div>
<div class="a" style="left:0px;top:315px;width:710px;height:15px;background:#bfbbaf"></div>
<div class="a mono" style="left:16px;top:316px"><span style="color:#f6f6ee">.text:10001EE5 68 ED 40 00 10                          push    offset SEH_10001EE0</span></div>
<div class="a" style="left:0px;top:330px;width:710px;height:15px;background:#bfbbaf"></div>
<div class="a mono" style="left:16px;top:331px"><span style="color:#f6f6ee">.text:10001EEA 64 A1 00 00 00 00                       mov     eax, large fs:0</span></div>
<div class="a" style="left:0px;top:345px;width:710px;height:15px;background:#bfbbaf"></div>
<div class="a mono" style="left:16px;top:346px"><span style="color:#f6f6ee">.text:10001EF0 50                                      push    eax</span></div>
<div class="a" style="left:0px;top:360px;width:710px;height:15px;background:#bfbbaf"></div>
<div class="a mono" style="left:16px;top:361px"><span style="color:#f6f6ee">.text:10001EF1 83 EC 24                                sub     esp, 24h</span></div>
<div class="a" style="left:0px;top:375px;width:710px;height:15px;background:#bfbbaf"></div>
<div class="a mono" style="left:16px;top:376px"><span style="color:#f6f6ee">.text:10001EF4 A1 08 60 00 10                          mov     eax, ___security_cookie</span></div>
<div class="a" style="left:0px;top:390px;width:710px;height:15px;background:#bfbbaf"></div>
<div class="a mono" style="left:16px;top:391px"><span style="color:#f6f6ee">.text:10001EF9 33 C5                                   xor     eax, ebp</span></div>
<div class="a" style="left:0px;top:405px;width:710px;height:15px;background:#bfbbaf"></div>
<div class="a mono" style="left:16px;top:406px"><span style="color:#f6f6ee">.text:10001EFB 89 45 F0                                mov     [ebp+var_10], eax</span></div>
<div class="a" style="left:0px;top:420px;width:710px;height:15px;background:#bfbbaf"></div>
<div class="a mono" style="left:16px;top:421px"><span style="color:#f6f6ee">.text:10001EFE 50                                      push    eax</span></div>
<div class="a" style="left:0px;top:435px;width:710px;height:15px;background:#bfbbaf"></div>
<div class="a mono" style="left:16px;top:436px"><span style="color:#f6f6ee">.text:10001EFF 8D 45 F4                                lea     eax, [ebp+var_C]</span></div>
<div class="a" style="left:0;top:450px;width:163px;height:15px;background:#bfbbaf"></div>
<div class="a" style="left:163px;top:450px;width:14px;height:15px;background:#ffff00"></div>
<div class="a" style="left:184px;top:450px;width:14px;height:15px;background:#ffff00"></div>
<div class="a" style="left:205px;top:450px;width:14px;height:15px;background:#ffff00"></div>
<div class="a" style="left:226px;top:450px;width:14px;height:15px;background:#ffff00"></div>
<div class="a mono" style="left:16px;top:451px"><span style="color:#f6f6ee">.text:10001F02 64 A3 </span><span style="color:#0000ff">00</span><span style="color:#000000"> </span><span style="color:#0000ff">00</span><span style="color:#000000"> </span><span style="color:#0000ff">00</span><span style="color:#000000"> </span><span style="color:#0000ff">00</span><span style="color:#000000">                       </span><span style="color:#000080">mov</span><span style="color:#000000">     </span><span style="color:#000080">large fs:</span><span style="color:#008000">0</span><span style="color:#000080">, eax</span></div>
<div class="a" style="left:0;top:465px;width:710px;height:15px;background:#d2fcd2"></div>
<div class="a" style="left:0;top:465px;width:16px;height:1px;background:#bdeebd"></div>
<div class="a mono" style="left:16px;top:466px"><span style="color:#000000">.text:10001F08 </span><span style="color:#0000ff">6A 23</span><span style="color:#000000">                                   </span><span style="color:#000080">push</span><span style="color:#000000">    </span><span style="color:#008000">23h</span><span style="color:#000000"> </span><span style="color:#808080">; &#x27;#&#x27;</span><span style="color:#000000">       </span><span style="color:#0000ff">; vKey</span></div>
<div class="a" style="left:0;top:480px;width:710px;height:15px;background:#d2fcd2"></div>
<div class="a" style="left:0;top:480px;width:16px;height:1px;background:#bdeebd"></div>
<div class="a" style="left:205px;top:480px;width:14px;height:15px;background:#d0f070"></div>
<div class="a mono" style="left:16px;top:481px"><span style="color:#000000">.text:10001F0A </span><span style="color:#0000ff">FF 15 54 50 00 10</span><span style="color:#000000">                       </span><span style="color:#000080">call</span><span style="color:#000000">    </span><span style="color:#000080">ds:</span><span style="color:#ff00ff">GetAsyncKeyState</span></div>
<div class="a" style="left:0;top:495px;width:710px;height:15px;background:#d2fcd2"></div>
<div class="a" style="left:0;top:495px;width:16px;height:1px;background:#bdeebd"></div>
<div class="a mono" style="left:16px;top:496px"><span style="color:#000000">.text:10001F10 </span><span style="color:#0000ff">98</span><span style="color:#000000">                                      </span><span style="color:#000080">cwde</span></div>
<div class="a" style="left:0;top:510px;width:710px;height:15px;background:#d2fcd2"></div>
<div class="a" style="left:0;top:510px;width:16px;height:1px;background:#bdeebd"></div>
<div class="a mono" style="left:16px;top:511px"><span style="color:#000000">.text:10001F11 </span><span style="color:#0000ff">83 E0 01</span><span style="color:#000000">                                </span><span style="color:#000080">and</span><span style="color:#000000">     </span><span style="color:#000080">eax, </span><span style="color:#008000">1</span></div>
<div class="a" style="left:0;top:525px;width:16px;height:1px;background:#bdeebd"></div>
<div class="a" style="left:0;top:525px;width:710px;height:15px;background:#c0e2c0"></div>
<div class="a mono" style="left:16px;top:526px"><span style="color:#0000ff">.text:10001F14 74 05</span><span style="color:#000000">                                   </span><span style="color:#000080">jz</span><span style="color:#000000">      </span><span style="color:#000080">short loc_10001F1B</span></div>
<div class="a" style="left:711px;top:0;width:16px;height:561px;background:#f0f0f0"></div>
<svg class="a" style="left:715px;top:7px" width="8" height="5"><path d="M0.5 4.5L4 1L7.5 4.5" fill="none" stroke="#606060" stroke-width="2"/></svg>
<div class="a" style="left:711px;top:97px;width:15px;height:18px;background:#cdcdcd"></div>
<svg class="a" style="left:715px;top:550px" width="8" height="5"><path d="M0.5 0.5L4 4L7.5 0.5" fill="none" stroke="#606060" stroke-width="2"/></svg>
<div class="a" style="left:0;top:541px;width:711px;height:20px;background:#f0f0f0"></div>
<div class="a mono st" style="left:2px;top:545px">00001314</div>
<div class="a mono st" style="left:64px;top:545px">10001F14: CheckHotkeys+34</div>
<div class="a mono st" style="left:246px;top:545px">(Synchronized with Hex View-1, Pseudocode-A)</div>
<div class="a" style="left:59px;top:543px;width:1px;height:17px;background:#d0d0d0"></div>
<div class="a" style="left:240px;top:543px;width:1px;height:17px;background:#d0d0d0"></div>
<div class="a" style="left:0;top:562px;width:727px;height:16px;background:#f0f0f0"></div>
<div class="a" style="left:711px;top:555px;width:16px;height:8px;background:#f0f0f0"></div>
<svg class="a" style="left:5px;top:566px" width="5" height="8"><path d="M4.5 0.5L1 4L4.5 7.5" fill="none" stroke="#606060" stroke-width="2"/></svg>
<div class="a" style="left:17px;top:562px;width:577px;height:15px;background:#cdcdcd"></div>
<svg class="a" style="left:699px;top:566px" width="5" height="8"><path d="M0.5 0.5L4 4L0.5 7.5" fill="none" stroke="#606060" stroke-width="2"/></svg>
</div>
<div class="a" style="left:277px;top:332px;width:6px;height:6px;border-radius:3px;background:#58c9fb"></div>
<div class="a" style="left:277px;top:347px;width:6px;height:6px;border-radius:3px;background:#58c9fb"></div>
<div class="a" style="left:277px;top:362px;width:6px;height:6px;border-radius:3px;background:#58c9fb"></div>
<div class="a" style="left:277px;top:377px;width:6px;height:6px;border-radius:3px;background:#58c9fb"></div>
<div class="a" style="left:277px;top:392px;width:6px;height:6px;border-radius:3px;background:#58c9fb"></div>
<div class="a" style="left:277px;top:407px;width:6px;height:6px;border-radius:3px;background:#58c9fb"></div>
<div class="a" style="left:277px;top:422px;width:6px;height:6px;border-radius:3px;background:#58c9fb"></div>
<div class="a" style="left:277px;top:437px;width:6px;height:6px;border-radius:3px;background:#58c9fb"></div>
<div class="a" style="left:277px;top:452px;width:6px;height:6px;border-radius:3px;background:#58c9fb"></div>
<div class="a" style="left:277px;top:467px;width:6px;height:6px;border-radius:3px;background:#58c9fb"></div>
<div class="a" style="left:277px;top:482px;width:6px;height:6px;border-radius:3px;background:#58c9fb"></div>
<div class="a" style="left:277px;top:497px;width:6px;height:6px;border-radius:3px;background:#58c9fb"></div>
<div class="a" style="left:277px;top:512px;width:6px;height:6px;border-radius:3px;background:#58c9fb"></div>
<div class="a" style="left:277px;top:527px;width:6px;height:6px;border-radius:3px;background:#58c9fb"></div>
<div class="a" style="left:277px;top:542px;width:6px;height:6px;border-radius:3px;background:#58c9fb"></div>
<div class="a" style="left:277px;top:557px;width:6px;height:6px;border-radius:3px;background:#58c9fb"></div>
<div class="a" style="left:277px;top:572px;width:6px;height:6px;border-radius:3px;background:#58c9fb"></div>
<div class="a" style="left:277px;top:587px;width:6px;height:6px;border-radius:3px;background:#58c9fb"></div>
<div class="a" style="left:277px;top:602px;width:6px;height:6px;border-radius:3px;background:#58c9fb"></div>
<svg class="a" style="left:258px;top:594px" width="30" height="48"><path d="M8.5 3.5V40M8.5 3.5H23" fill="none" stroke="#a8a8a8" stroke-width="1.2" stroke-dasharray="5 3"/><path d="M4 40H13L8.5 45Z" fill="#a8a8a8"/></svg>
<svg class="a" style="left:296px;top:337px" width="9" height="7"><path d="M0.9 1L4.5 5.2L8.1 1" fill="none" stroke="#444" stroke-width="1.6"/></svg>
<div class="a" style="left:1025px;top:30px;width:667px;height:30px;border:1px solid #7d838b;border-right:none;background:#fff"></div>
<div class="a" style="left:1029px;top:36px"><svg class="ic" width="17" height="17" viewBox="0 0 17 17"><rect x="0.5" y="0.5" width="14" height="14" fill="#e6fcff" stroke="#2f72e4"/><rect x="0" y="0" width="15" height="3" fill="url(#tbg)"/><rect x="1" y="3" width="13" height="1" fill="#ffffff"/><defs><linearGradient id="dg" x1="0" y1="0" x2="1" y2="1"><stop offset="0" stop-color="#ffffff"/><stop offset="1" stop-color="#cfe4fa"/></linearGradient></defs><rect x="5.5" y="3.5" width="11" height="13" fill="url(#dg)" stroke="#1d4f8c"/><path d="M7 6.5h3M9 8.5h4.5M9 10.5h4.5M7 12.5h3M9 14.5h4.5" stroke="#3c3c3c" stroke-width="1.1"/></svg></div>
<div class="a ui" style="left:1051px;top:39px">Pseudocode-A</div>
<div style="position:absolute;left:0;top:0;background:#fff"><svg class="a" style="left:1623px;top:41px" width="10" height="10" viewBox="0 0 10 10"><rect x="0.5" y="0.5" width="9" height="9" fill="#ebebeb" stroke="#2b2b2b"/><rect x="0" y="0" width="10" height="2.5" fill="#2b2b2b"/></svg>
<svg class="a" style="left:1651px;top:41px" width="9" height="10" viewBox="0 0 9 10"><rect x="2.5" y="0.5" width="6" height="5.5" fill="none" stroke="#2b2b2b"/><rect x="2" y="0" width="7" height="2" fill="#2b2b2b"/><rect x="0.5" y="3.5" width="5" height="5" fill="#fff" stroke="#2b2b2b"/><rect x="0" y="3" width="6" height="2" fill="#2b2b2b"/></svg>
<svg class="a" style="left:1676px;top:42px" width="8" height="8" viewBox="0 0 8 8"><path d="M0.6 0.6L7.4 7.4M7.4 0.6L0.6 7.4" stroke="#2b2b2b" stroke-width="1.6"/></svg></div>
<div class="a" style="left:1025px;top:62px;width:37px;height:580px;background:#fff"></div>
<div class="a" style="left:1066px;top:62px;width:626px;height:580px;border:1px solid #0078d7;border-right:none;background:#fff;overflow:hidden">
<div class="a mono" style="left:0px;top:1px"><span style="color:#808080">SHORT __cdecl CheckHotkeys</span><span style="color:#000080">(</span><span style="color:#808080">bool *cheat_enabled</span><span style="color:#000080">)</span></div>
<div class="a mono" style="left:0px;top:16px"><span style="color:#000080">{</span></div>
<div class="a mono" style="left:0px;top:31px"><span style="color:#808080">  SHORT result</span><span style="color:#000080">; </span><span style="color:#0000ff">// </span><span style="color:#8080f0">ax</span></div>
<div class="a mono" style="left:0px;top:46px"><span style="color:#000080">  const WCHAR *v2; </span><span style="color:#0000ff">// </span><span style="color:#8080f0">eax</span></div>
<div class="a mono" style="left:0px;top:61px"><span style="color:#000080">  int v3[6]; </span><span style="color:#0000ff">// </span><span style="color:#8080f0">[esp+Ch] [ebp-28h] BYREF</span></div>
<div class="a mono" style="left:0px;top:76px"><span style="color:#808080">  int v4</span><span style="color:#000080">; </span><span style="color:#0000ff">// </span><span style="color:#8080f0">[esp+30h] [ebp-4h]</span></div>
<div class="a mono" style="left:0px;top:91px"><span style="color:#000080"></span></div>
<div class="a" style="left:0;top:105px;width:640px;height:15px;background:#c0e4c0"></div>
<div class="a mono" style="left:0px;top:106px"><span style="color:#000080">  if ( (</span><span style="color:#ff00ff">GetAsyncKeyState</span><span style="color:#000080">(35) &amp; 1) != 0 )</span></div>
<div class="a mono" style="left:0px;top:121px"><span style="color:#000080">    </span><span style="color:#0000ff">sub_10001EC0</span><span style="color:#000080">();</span></div>
<div class="a mono" style="left:0px;top:136px"><span style="color:#000080">  </span><span style="color:#8080f0">result</span><span style="color:#000080"> = </span><span style="color:#ff00ff">GetAsyncKeyState</span><span style="color:#000080">(69);</span></div>
<div class="a mono" style="left:0px;top:151px"><span style="color:#000080">  if ( (</span><span style="color:#8080f0">result</span><span style="color:#000080"> &amp; 1) != 0 )</span></div>
<div class="a mono" style="left:0px;top:166px"><span style="color:#000080">  {</span></div>
<div class="a mono" style="left:0px;top:181px"><span style="color:#000080">    *</span><span style="color:#8080f0">cheat_enabled</span><span style="color:#000080"> = !*</span><span style="color:#8080f0">cheat_enabled</span><span style="color:#000080">;</span></div>
<div class="a mono" style="left:0px;top:196px"><span style="color:#000080">    if ( *</span><span style="color:#8080f0">cheat_enabled</span><span style="color:#000080"> )</span></div>
<div class="a mono" style="left:0px;top:211px"><span style="color:#000080">      </span><span style="color:#0000ff">sub_100020B0</span><span style="color:#000080">((</span><span style="color:#808080">int</span><span style="color:#000080">)</span><span style="color:#8080f0">v3</span><span style="color:#000080">, (</span><span style="color:#808080">int</span><span style="color:#000080">)&amp;</span><span style="color:#0000ff">unk_10006424</span><span style="color:#000080">, L&quot;</span><span style="color:#008000"> [ON]</span><span style="color:#000080">&quot;);</span></div>
<div class="a mono" style="left:0px;top:226px"><span style="color:#000080">    else</span></div>
<div class="a mono" style="left:0px;top:241px"><span style="color:#000080">      </span><span style="color:#0000ff">sub_100020B0</span><span style="color:#000080">((</span><span style="color:#808080">int</span><span style="color:#000080">)</span><span style="color:#8080f0">v3</span><span style="color:#000080">, (</span><span style="color:#808080">int</span><span style="color:#000080">)&amp;</span><span style="color:#0000ff">unk_10006424</span><span style="color:#000080">, L&quot;</span><span style="color:#008000"> [OFF]</span><span style="color:#000080">&quot;);</span></div>
<div class="a mono" style="left:0px;top:256px"><span style="color:#000080">    </span><span style="color:#8080f0">v4</span><span style="color:#000080"> = 0;</span></div>
<div class="a mono" style="left:0px;top:271px"><span style="color:#000080">    </span><span style="color:#8080f0">v2</span><span style="color:#000080"> = (</span><span style="color:#808080">const WCHAR *</span><span style="color:#000080">)</span><span style="color:#0000ff">sub_100023A0</span><span style="color:#000080">(</span><span style="color:#8080f0">v3</span><span style="color:#000080">);</span></div>
<div class="a mono" style="left:0px;top:286px"><span style="color:#000080">    </span><span style="color:#0000ff">sub_10001E40</span><span style="color:#000080">(</span><span style="color:#8080f0">v2</span><span style="color:#000080">);</span></div>
<div class="a mono" style="left:0px;top:301px"><span style="color:#000080">    </span><span style="color:#8080f0">v4</span><span style="color:#000080"> = -1;</span></div>
<div class="a mono" style="left:0px;top:316px"><span style="color:#000080">    return </span><span style="color:#0000ff">sub_10002520</span><span style="color:#000080">();</span></div>
<div class="a mono" style="left:0px;top:331px"><span style="color:#000080">  }</span></div>
<div class="a mono" style="left:0px;top:346px"><span style="color:#000080">  return </span><span style="color:#8080f0">result</span><span style="color:#000080">;</span></div>
<div class="a mono" style="left:0px;top:361px"><span style="color:#000080">}</span></div>
<div class="a" style="left:0;top:558px;width:626px;height:21px;background:#f0f0f0"></div>
<div class="a mono st" style="left:3px;top:562px">00001314</div>
<div class="a mono st" style="left:64px;top:562px">CheckHotkeys:8 (10001F14)</div>
<div class="a mono st" style="left:247px;top:562px">(Synchronized with IDA View-A, Hex View-1)</div>
<div class="a" style="left:59px;top:560px;width:1px;height:17px;background:#d0d0d0"></div>
<div class="a" style="left:240px;top:560px;width:1px;height:17px;background:#d0d0d0"></div>
<div class="a" style="left:540px;top:560px;width:1px;height:17px;background:#d0d0d0"></div>
</div>
<div class="a mono" style="left:1039px;top:65px;width:21px;text-align:right;color:#808080">1</div>
<div class="a mono" style="left:1039px;top:80px;width:21px;text-align:right;color:#808080">2</div>
<div class="a mono" style="left:1039px;top:95px;width:21px;text-align:right;color:#808080">3</div>
<div class="a mono" style="left:1039px;top:110px;width:21px;text-align:right;color:#808080">4</div>
<div class="a mono" style="left:1039px;top:125px;width:21px;text-align:right;color:#808080">5</div>
<div class="a mono" style="left:1039px;top:140px;width:21px;text-align:right;color:#808080">6</div>
<div class="a mono" style="left:1039px;top:155px;width:21px;text-align:right;color:#808080">7</div>
<div class="a mono" style="left:1039px;top:170px;width:21px;text-align:right;color:#808080">8</div>
<div class="a" style="left:1031.5px;top:171px;width:8px;height:8px;border-radius:4px;background:#58c9fb"></div>
<div class="a mono" style="left:1039px;top:185px;width:21px;text-align:right;color:#808080">9</div>
<div class="a" style="left:1031.5px;top:186px;width:8px;height:8px;border-radius:4px;background:#58c9fb"></div>
<div class="a mono" style="left:1039px;top:200px;width:21px;text-align:right;color:#808080">10</div>
<div class="a" style="left:1031.5px;top:201px;width:8px;height:8px;border-radius:4px;background:#58c9fb"></div>
<div class="a mono" style="left:1039px;top:215px;width:21px;text-align:right;color:#808080">11</div>
<div class="a" style="left:1031.5px;top:216px;width:8px;height:8px;border-radius:4px;background:#58c9fb"></div>
<div class="a mono" style="left:1039px;top:230px;width:21px;text-align:right;color:#808080">12</div>
<div class="a mono" style="left:1039px;top:245px;width:21px;text-align:right;color:#808080">13</div>
<div class="a" style="left:1031.5px;top:246px;width:8px;height:8px;border-radius:4px;background:#58c9fb"></div>
<div class="a mono" style="left:1039px;top:260px;width:21px;text-align:right;color:#808080">14</div>
<div class="a" style="left:1031.5px;top:261px;width:8px;height:8px;border-radius:4px;background:#58c9fb"></div>
<div class="a mono" style="left:1039px;top:275px;width:21px;text-align:right;color:#808080">15</div>
<div class="a" style="left:1031.5px;top:276px;width:8px;height:8px;border-radius:4px;background:#58c9fb"></div>
<div class="a mono" style="left:1039px;top:290px;width:21px;text-align:right;color:#808080">16</div>
<div class="a mono" style="left:1039px;top:305px;width:21px;text-align:right;color:#808080">17</div>
<div class="a" style="left:1031.5px;top:306px;width:8px;height:8px;border-radius:4px;background:#58c9fb"></div>
<div class="a mono" style="left:1039px;top:320px;width:21px;text-align:right;color:#808080">18</div>
<div class="a" style="left:1031.5px;top:321px;width:8px;height:8px;border-radius:4px;background:#58c9fb"></div>
<div class="a mono" style="left:1039px;top:335px;width:21px;text-align:right;color:#808080">19</div>
<div class="a" style="left:1031.5px;top:336px;width:8px;height:8px;border-radius:4px;background:#58c9fb"></div>
<div class="a mono" style="left:1039px;top:350px;width:21px;text-align:right;color:#808080">20</div>
<div class="a" style="left:1031.5px;top:351px;width:8px;height:8px;border-radius:4px;background:#58c9fb"></div>
<div class="a mono" style="left:1039px;top:365px;width:21px;text-align:right;color:#808080">21</div>
<div class="a" style="left:1031.5px;top:366px;width:8px;height:8px;border-radius:4px;background:#58c9fb"></div>
<div class="a mono" style="left:1039px;top:380px;width:21px;text-align:right;color:#808080">22</div>
<div class="a" style="left:1031.5px;top:381px;width:8px;height:8px;border-radius:4px;background:#58c9fb"></div>
<div class="a mono" style="left:1039px;top:395px;width:21px;text-align:right;color:#808080">23</div>
<div class="a mono" style="left:1039px;top:410px;width:21px;text-align:right;color:#808080">24</div>
<div class="a" style="left:1031.5px;top:411px;width:8px;height:8px;border-radius:4px;background:#58c9fb"></div>
<div class="a mono" style="left:1039px;top:425px;width:21px;text-align:right;color:#808080">25</div>
<div class="a" style="left:1031.5px;top:426px;width:8px;height:8px;border-radius:4px;background:#58c9fb"></div>
</body></html>
